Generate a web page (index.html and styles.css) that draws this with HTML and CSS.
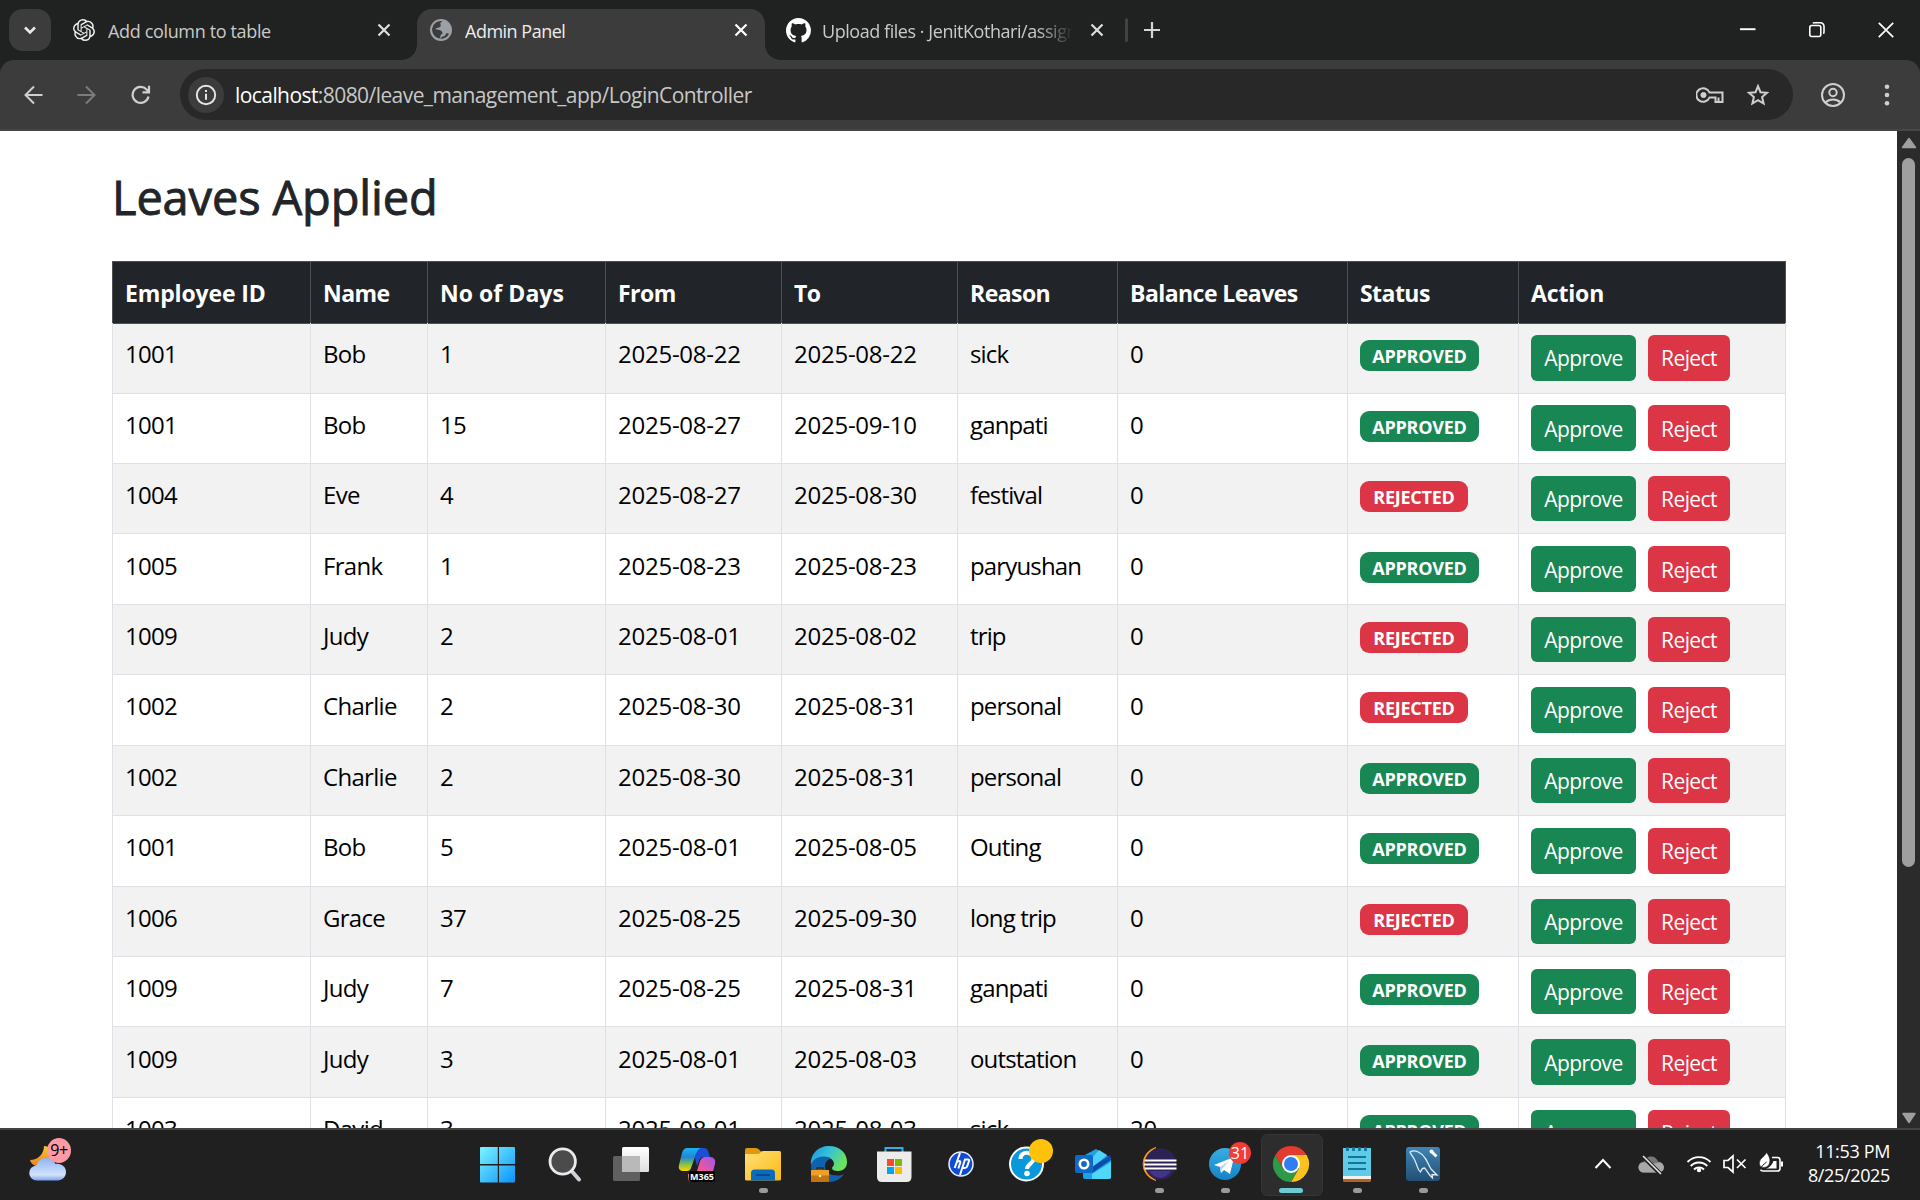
FILE: index.html
```html
<!DOCTYPE html>
<html lang="en">
<head>
<meta charset="utf-8">
<title>Admin Panel</title>
<link rel="stylesheet" href="styles.css">
</head>
<body>
<div class="desktop">
  <header class="tabstrip">
    <div class="tab-search"><svg width="42" height="42" viewBox="0 0 42 42"><path d="M16 18.5l5 5 5-5" fill="none" stroke="#e8e8e8" stroke-width="2.6"/></svg></div>
    <div class="tab tab-first">
      <svg class="fav" width="22" height="22" viewBox="0 0 24 24" fill="#f0f0f0"><path d="M22.28 9.82a5.98 5.98 0 0 0-.52-4.91 6.05 6.05 0 0 0-6.51-2.9A6.07 6.07 0 0 0 4.98 4.18a5.98 5.98 0 0 0-4 2.9 6.05 6.05 0 0 0 .74 7.1 5.98 5.98 0 0 0 .51 4.91 6.05 6.05 0 0 0 6.52 2.9A5.98 5.98 0 0 0 13.26 24a6.06 6.06 0 0 0 5.77-4.21 5.99 5.99 0 0 0 4-2.9 6.06 6.06 0 0 0-.75-7.07zm-9.02 12.61a4.48 4.48 0 0 1-2.88-1.04l.14-.08 4.78-2.76a.79.79 0 0 0 .39-.68v-6.74l2.02 1.17a.07.07 0 0 1 .04.05v5.58a4.5 4.5 0 0 1-4.49 4.5zM3.6 18.3a4.47 4.47 0 0 1-.54-3.01l.14.08 4.78 2.76a.77.77 0 0 0 .78 0l5.84-3.37v2.33a.08.08 0 0 1-.03.06L9.74 19.95a4.5 4.5 0 0 1-6.14-1.65zM2.34 7.9a4.49 4.49 0 0 1 2.37-1.98v5.68a.77.77 0 0 0 .39.68l5.81 3.35-2.02 1.17a.08.08 0 0 1-.07 0l-4.83-2.79A4.5 4.5 0 0 1 2.34 7.87zm16.6 3.86L13.1 8.36 15.12 7.2a.08.08 0 0 1 .07 0l4.83 2.79a4.49 4.49 0 0 1-.68 8.1v-5.68a.79.79 0 0 0-.4-.65zm2.01-3.02l-.14-.09-4.77-2.78a.78.78 0 0 0-.79 0L9.41 9.23V6.9a.07.07 0 0 1 .03-.06l4.83-2.79a4.5 4.5 0 0 1 6.68 4.66zM8.31 12.86l-2.02-1.16a.08.08 0 0 1-.04-.06V6.07a4.5 4.5 0 0 1 7.38-3.45l-.14.08L8.7 5.46a.79.79 0 0 0-.39.68zm1.1-2.37L12 9l2.61 1.5v3L12 15l-2.6-1.5z"/></svg>
      <span class="tab-title t1">Add column to table</span>
      <svg class="x" width="14" height="14" viewBox="0 0 14 14"><path d="M1.5 1.5l11 11M12.500 1.5l-11 11" stroke="#dedede" stroke-width="2.2"/></svg>
    </div>
    <div class="tab tab-active">
      <svg class="fav" width="22" height="22" viewBox="0 0 22 22"><circle cx="11" cy="11" r="11" fill="#9aa0a6"/><path d="M12.500 2.200c-2 1-2.500 2-2 3.300 .8.500 0 2.500-1.500 3-1.800.5-3.500.7-3.500 1.700l4 .8c1.500.5 3 1.500 3 3 0 1.200-1.500 1.500-2 2.500l-.5 3A9 9 0 0 1 2 11c0 1 1 1.500 2.500 2 1 .3 2.500.5 2.500 1.500v2.500c-3-1.500-5-4-5-7a9 9 0 0 1 10.500-7.800z" fill="#3c3c3c"/><path d="M10 19.800c1-.5 1.500-1.800 2.800-2.200 1.200-.4 2.500-.5 2.700-1.800.2-1 1-1.800 2.200-1.500l1.300.8c-1.500 3-5 5-9 4.700z" fill="#3c3c3c"/></svg>
      <span class="tab-title t2">Admin Panel</span>
      <svg class="x" width="14" height="14" viewBox="0 0 14 14"><path d="M1.500 1.500l11 11M12.500 1.500l-11 11" stroke="#fff" stroke-width="2.200"/></svg>
    </div>
    <div class="tab tab-last">
      <svg class="fav" width="25" height="25" viewBox="0 0 16 16" fill="#fff"><path d="M8 0C3.580 0 0 3.580 0 8c0 3.540 2.290 6.530 5.470 7.590.4.070.55-.17.55-.38 0-.19-.01-.82-.01-1.490-2.010.37-2.530-.49-2.690-.94-.09-.23-.48-.94-.82-1.130-.28-.15-.68-.52-.01-.53.63-.01 1.080.58 1.230.82.72 1.210 1.870.87 2.330.66.070-.52.28-.87.51-1.070-1.780-.2-3.640-.89-3.640-3.950 0-.87.31-1.590.82-2.150-.08-.2-.36-1.020.08-2.120 0 0 .67-.21 2.200.82.64-.18 1.320-.27 2-.27s1.360.09 2 .27c1.530-1.040 2.200-.82 2.200-.82.44 1.100.16 1.920.08 2.120.51.56.82 1.270.82 2.150 0 3.070-1.870 3.750-3.650 3.950.29.25.54.73.54 1.480 0 1.070-.01 1.930-.01 2.200 0 .21.15.46.55.38A8.010 8.010 0 0 0 16 8c0-4.420-3.580-8-8-8z"/></svg>
      <span class="tab-title t3">Upload files · JenitKothari/assignment</span>
      <svg class="x" width="14" height="14" viewBox="0 0 14 14"><path d="M1.500 1.500l11 11M12.500 1.500l-11 11" stroke="#dedede" stroke-width="2.200"/></svg>
    </div>
    <i class="tab-sep"></i>
    <svg class="newtab" width="16" height="16" viewBox="0 0 16 16"><path d="M8 0v16M0 8h16" stroke="#d6d6d6" stroke-width="2.200"/></svg>
    <div class="winctl">
      <svg width="16" height="16" viewBox="0 0 16 16"><path d="M0 7.200h15.500" stroke="#fff" stroke-width="1.900"/></svg>
      <svg width="16" height="16" viewBox="0 0 16 16" fill="none" stroke="#fff" stroke-width="1.600"><rect x=".8" y="3.500" width="11" height="11" rx="2"/><path d="M3.800 1.200C4.200.8 5 .8 6 .8h5.500a3.500 3.500 0 0 1 3.500 3.500V9.500c0 1.200-.2 1.800-.6 2.200"/></svg>
      <svg width="16" height="16" viewBox="0 0 16 16"><path d="M.8.8l14.400 14.400M15.200.8L.8 15.200" stroke="#fff" stroke-width="1.700"/></svg>
    </div>
  </header>

  <div class="toolbar">
    <svg class="nav" width="20" height="20" viewBox="0 0 20 20" fill="none" stroke="#cfcfcf" stroke-width="2"><path d="M19.500 10H2.500M11 1.500L2.500 10l8.500 8.500"/></svg>
    <svg class="nav" width="20" height="20" viewBox="0 0 20 20" fill="none" stroke="#7c7c7c" stroke-width="2"><path d="M.5 10h17M9 1.500l8.500 8.500L9 18.500"/></svg>
    <svg class="nav" width="20" height="20" viewBox="0 0 20 20" fill="none" stroke="#cfcfcf" stroke-width="2.200"><path d="M17.500 11.500A8 8 0 1 1 15.600 4.500L17.500 6.500M18 .8v6.500h-6.500"/></svg>
    <div class="omnibox">
      <span class="info"><svg width="22" height="22" viewBox="0 0 22 22"><circle cx="11" cy="11" r="9.200" fill="none" stroke="#e6e6e6" stroke-width="1.900"/><path d="M11 9.800v6M11 6v2" stroke="#e6e6e6" stroke-width="2"/></svg></span>
      <span class="url"><b>localhost</b>:8080/leave_management_app/LoginController</span>
      <svg class="key" width="28" height="20" viewBox="0 0 28 20" fill="none" stroke="#cfcfcf" stroke-width="2"><path d="M13.500 7.500A6.800 6.800 0 1 0 13.500 12.500H19.500V17H26.500V7.500z"/><circle cx="7.500" cy="10" r="2.600" fill="#cfcfcf" stroke-width="1"/><path d="M22.500 12.500V16" /></svg>
      <svg class="star" width="24" height="24" viewBox="0 0 24 24" fill="none" stroke="#cfcfcf" stroke-width="2"><path d="M12 3.200l2.500 6 6.500.6-4.900 4.300 1.500 6.400-5.600-3.400-5.600 3.400 1.500-6.400L3 9.800l6.500-.6z"/></svg>
    </div>
    <svg class="profile" width="26" height="26" viewBox="0 0 26 26" fill="none" stroke="#cfcfcf" stroke-width="2"><circle cx="13" cy="13" r="11"/><circle cx="13" cy="10.500" r="3.700"/><path d="M5.500 20.500c4-4 11-4 15 0"/></svg>
    <svg class="dots" width="6" height="24" viewBox="0 0 6 24" fill="#cfcfcf"><circle cx="3" cy="3.700" r="2.300"/><circle cx="3" cy="12" r="2.300"/><circle cx="3" cy="20.300" r="2.300"/></svg>
  </div>

  <div class="viewport">
    <main class="page">
      <h2>Leaves Applied</h2>
      <table>
        <thead>
          <tr><th class="w0">Employee ID</th><th class="w1">Name</th><th class="w2">No of Days</th><th class="w3">From</th><th class="w4">To</th><th class="w5">Reason</th><th class="w6">Balance Leaves</th><th class="w7">Status</th><th class="w8">Action</th></tr>
        </thead>
        <tbody>
          <tr><td>1001</td><td>Bob</td><td>1</td><td>2025-08-22</td><td>2025-08-22</td><td>sick</td><td>0</td><td><span class="badge ok">APPROVED</span></td><td class="act"><button class="btn ok">Approve</button><button class="btn no">Reject</button></td></tr>
          <tr><td>1001</td><td>Bob</td><td>15</td><td>2025-08-27</td><td>2025-09-10</td><td>ganpati</td><td>0</td><td><span class="badge ok">APPROVED</span></td><td class="act"><button class="btn ok">Approve</button><button class="btn no">Reject</button></td></tr>
          <tr><td>1004</td><td>Eve</td><td>4</td><td>2025-08-27</td><td>2025-08-30</td><td>festival</td><td>0</td><td><span class="badge no">REJECTED</span></td><td class="act"><button class="btn ok">Approve</button><button class="btn no">Reject</button></td></tr>
          <tr><td>1005</td><td>Frank</td><td>1</td><td>2025-08-23</td><td>2025-08-23</td><td>paryushan</td><td>0</td><td><span class="badge ok">APPROVED</span></td><td class="act"><button class="btn ok">Approve</button><button class="btn no">Reject</button></td></tr>
          <tr><td>1009</td><td>Judy</td><td>2</td><td>2025-08-01</td><td>2025-08-02</td><td>trip</td><td>0</td><td><span class="badge no">REJECTED</span></td><td class="act"><button class="btn ok">Approve</button><button class="btn no">Reject</button></td></tr>
          <tr><td>1002</td><td>Charlie</td><td>2</td><td>2025-08-30</td><td>2025-08-31</td><td>personal</td><td>0</td><td><span class="badge no">REJECTED</span></td><td class="act"><button class="btn ok">Approve</button><button class="btn no">Reject</button></td></tr>
          <tr><td>1002</td><td>Charlie</td><td>2</td><td>2025-08-30</td><td>2025-08-31</td><td>personal</td><td>0</td><td><span class="badge ok">APPROVED</span></td><td class="act"><button class="btn ok">Approve</button><button class="btn no">Reject</button></td></tr>
          <tr><td>1001</td><td>Bob</td><td>5</td><td>2025-08-01</td><td>2025-08-05</td><td>Outing</td><td>0</td><td><span class="badge ok">APPROVED</span></td><td class="act"><button class="btn ok">Approve</button><button class="btn no">Reject</button></td></tr>
          <tr><td>1006</td><td>Grace</td><td>37</td><td>2025-08-25</td><td>2025-09-30</td><td>long trip</td><td>0</td><td><span class="badge no">REJECTED</span></td><td class="act"><button class="btn ok">Approve</button><button class="btn no">Reject</button></td></tr>
          <tr><td>1009</td><td>Judy</td><td>7</td><td>2025-08-25</td><td>2025-08-31</td><td>ganpati</td><td>0</td><td><span class="badge ok">APPROVED</span></td><td class="act"><button class="btn ok">Approve</button><button class="btn no">Reject</button></td></tr>
          <tr><td>1009</td><td>Judy</td><td>3</td><td>2025-08-01</td><td>2025-08-03</td><td>outstation</td><td>0</td><td><span class="badge ok">APPROVED</span></td><td class="act"><button class="btn ok">Approve</button><button class="btn no">Reject</button></td></tr>
          <tr><td>1003</td><td>David</td><td>3</td><td>2025-08-01</td><td>2025-08-03</td><td>sick</td><td>20</td><td><span class="badge ok">APPROVED</span></td><td class="act"><button class="btn ok">Approve</button><button class="btn no">Reject</button></td></tr>
        </tbody>
      </table>
    </main>
    <div class="scrollbar">
      <svg width="16" height="12" viewBox="0 0 16 12"><path d="M8 1.500L14.500 10.500H1.500z" fill="#9f9f9f" stroke="#9f9f9f" stroke-width="1.500" stroke-linejoin="round"/></svg>
      <i class="thumb"></i>
      <svg class="down" width="16" height="12" viewBox="0 0 16 12"><path d="M8 10.500L14 1.500H2z" fill="#9f9f9f" stroke="#9f9f9f" stroke-width="1.500" stroke-linejoin="round"/></svg>
    </div>
  </div>

  <footer class="taskbar">
    <div class="weather">
      <svg width="40" height="40" viewBox="28 1144 40 40">
        <defs>
          <linearGradient id="moon" x1="0" y1="0" x2="0" y2="1"><stop offset="0" stop-color="#f6c83a"/><stop offset="1" stop-color="#ee7d18"/></linearGradient>
          <linearGradient id="cloud" x1="0" y1="0" x2="0" y2="1"><stop offset="0" stop-color="#8db4f4"/><stop offset=".75" stop-color="#d3e2fa"/><stop offset="1" stop-color="#7ba2ee"/></linearGradient>
        </defs>
        <path d="M44 1146c0 8-6 14-14 14 1 4 5 7 11 7 8 0 13-6 12-13-1-5-5-8-9-8z" fill="url(#moon)"/>
        <path d="M37 1180.500a7.500 7.500 0 0 1-.5-15c1-4.500 5-7.500 9.500-7.500s8 2.500 9.500 6c6-1 10.500 3 10.500 8 0 4.700-3.500 8.500-8.500 8.500z" fill="url(#cloud)"/>
      </svg>
      <span class="wbadge">9+</span>
    </div>
    <div class="apps">
      <div class="app"><svg width="66" height="70" viewBox="0 2 66 70"><defs><linearGradient id="win" x1="0" y1="0" x2="1" y2="1"><stop offset="0" stop-color="#7df3ff"/><stop offset="1" stop-color="#0a94fb"/></linearGradient></defs><path fill="url(#win)" d="M17 19h16.800v17H16V20q0-1 1-1zM35 19h15q1 0 1 1v16H35zM16 37.500h17.800V54.500H17q-1 0-1-1zM35 37.500h16v16q0 1-1 1H35z"/></svg></div>
      <div class="app"><svg width="66" height="70" viewBox="0 2 66 70"><path d="M42.500 44l6.500 7.500" stroke="#cdd2d8" stroke-width="4" stroke-linecap="round"/><circle cx="32.700" cy="33.500" r="12.700" fill="#4b4b4b" stroke="#e9ebee" stroke-width="2.800"/></svg></div>
      <div class="app"><svg width="66" height="70" viewBox="0 2 66 70"><defs><linearGradient id="tv" x1="0" y1="0" x2="0" y2="1"><stop offset="0" stop-color="#fff"/><stop offset="1" stop-color="#dedede"/></linearGradient></defs><rect x="17" y="28" width="27" height="25" rx="1.500" fill="#606060"/><rect x="26" y="19" width="27" height="25" rx="1.500" fill="url(#tv)"/><rect x="26" y="28" width="18" height="16" fill="#b9b9b9"/></svg></div>
      <div class="app"><svg width="66" height="70" viewBox="0 2 66 70"><defs><linearGradient id="cpa" x1="0" y1="0" x2="0" y2="1"><stop offset="0" stop-color="#1ab4f0"/><stop offset=".4" stop-color="#1f86d8"/><stop offset=".7" stop-color="#7fc04b"/><stop offset="1" stop-color="#ffd500"/></linearGradient><linearGradient id="cpb" x1="1" y1="0" x2="0" y2="1"><stop offset="0" stop-color="#a056f0"/><stop offset=".5" stop-color="#f0569a"/><stop offset="1" stop-color="#ff8a4c"/></linearGradient></defs><path d="M34 20h8q3 0 4 3l2 6h-6q-4 0-5 4l-2 5-2-8z" fill="#1d4fd6"/><path d="M25 20h14c-3 1-4 3-5 6l-5 14q-1 3-4 3h-3c-4 0-6-2-5-6l3-12q1.500-5 5-5z" fill="url(#cpa)"/><path d="M42 29h6c4 0 6 3 5 7l-3 11c-1 4-4 7-8 7H28q-2-1-2-8h5q3 0 4-3l3-10q1-3 4-4z" fill="url(#cpb)"/><rect x="27" y="43" width="26" height="11" rx="2" fill="#000"/><text x="40" y="52" class="m365">M365</text></svg></div>
      <div class="app run"><svg width="66" height="70" viewBox="-2 2 66 70"><defs><linearGradient id="fo" x1="0" y1="0" x2="1" y2="1"><stop offset="0" stop-color="#ffe07a"/><stop offset="1" stop-color="#fcb911"/></linearGradient></defs><path d="M15 22q0-2 2-2h9q1.500 0 3 1.500l2 2-3 3H15z" fill="#e09a09"/><path d="M15 26h12q2 0 3-1.500T33 23h16.500q1.500 0 1.500 1.500V51q0 1.500-1.500 1.500h-33Q15 52.500 15 51z" fill="url(#fo)"/><path d="M21 52.500V45q0-3.500 3.500-3.500h17q3.500 0 3.500 3.500v7.500z" fill="#0b6cbf"/><path d="M26 47h14" stroke="#0a3f74" stroke-width="1.500"/></svg></div>
      <div class="app"><svg width="66" height="70" viewBox="-2 2 66 70"><defs><linearGradient id="eg" x1="0" y1="0" x2="1" y2=".5"><stop offset="0" stop-color="#1b8fe0"/><stop offset=".5" stop-color="#35c2d8"/><stop offset="1" stop-color="#6be45a"/></linearGradient></defs><path d="M15 37C14 26 22 18 33 18c11 0 18 7 18 16 0 6-4 9-9 9-4 0-6-1-6-3 0-1 2-2 2-4 0-4-4-7-9-7-6 0-12 3-14 8z" fill="url(#eg)"/><path d="M15 38c1-6 6-9.500 12-9.500 3 0 6 .5 8 2-4 1-6 4-6 8 0 6 5 9 12 9 3 0 5-.5 7-1.500-3 5-9 8-15 8-10 0-18-7-18-16z" fill="#0f63ae"/><path d="M15 42h18v10.500q0 1.500-1.500 1.500H15z" fill="#c27413"/><path d="M15 42h18v5.500H15z" fill="#ee9f26"/><path d="M21 41.500v-1.500h6v1.500" fill="none" stroke="#3c2810" stroke-width="1.500"/><circle cx="24" cy="48" r="1.300" fill="#ffe9a8"/></svg></div>
      <div class="app"><svg width="66" height="70" viewBox="0 2 66 70"><path d="M25.500 25v-5h17v5" fill="none" stroke="#2cb1e4" stroke-width="2"/><path d="M17 23.500h34.500V49q0 5-5 5H22q-5 0-5-5z" fill="#ececec"/><path d="M27 31h7v7h-7z" fill="#f25022"/><path d="M35 31h7v7h-7z" fill="#7fba00"/><path d="M27 39h7v7h-7z" fill="#00a4ef"/><path d="M35 39h7v7h-7z" fill="#ffb900"/></svg></div>
      <div class="app"><svg width="66" height="70" viewBox="0 2 66 70"><circle cx="35" cy="36" r="12" fill="#0f4bd8" stroke="#eef2ff" stroke-width="1.500"/><path d="M34 25l-5.300 15M31 34q4-2 3.300.5l-2 6M40 31.500h-1l-5 15.500M38.500 31.500h3.500q1.500 0 1 1.500l-1.700 5q-.6 2-2.500 2h-2.500" stroke="#fff" stroke-width="2" fill="none"/></svg></div>
      <div class="app"><svg width="66" height="70" viewBox="0 2 66 70"><circle cx="34.500" cy="36" r="16.500" fill="#0a98dc" stroke="#fff" stroke-width="2"/><path d="M28.500 31c0-9 14-7.500 13 .5-.5 4-6.500 4.500-6.500 9.500" fill="none" stroke="#fff" stroke-width="4"/><circle cx="35" cy="45.500" r="2.800" fill="#fff"/><circle cx="49" cy="23" r="12" fill="#ffc20a"/></svg></div>
      <div class="app"><svg width="66" height="70" viewBox="-2 2 66 70"><path d="M23 28l13-7 15 9v19q0 2-2 2H25q-2 0-2-2z" fill="#1f9fe6"/><path d="M30 32l9-10 8 5-14 12z" fill="#4fd2fa"/><path d="M32 39l18-12 1 5-19 13z" fill="#0b4ca8"/><path d="M32 46l19-12v15q0 2-2 2H32z" fill="#4dd8f8"/><rect x="15" y="27" width="18" height="18" rx="2" fill="#0f69c9"/><circle cx="24" cy="36" r="4.200" fill="none" stroke="#fff" stroke-width="2.600"/></svg></div>
      <div class="app run"><svg width="66" height="70" viewBox="0 2 66 70"><path d="M32 19.500a17 17 0 0 0 0 33C22 48 21 24 32 19.500z" fill="#f7941e" stroke="#f7941e" stroke-width="1"/><circle cx="36.500" cy="36" r="15.800" fill="#2c2255"/><path d="M25 43h22q-5 7-11 7t-11-7z" fill="#43348c"/><path d="M20.500 32.500h32M20 36.500h32.500M20.500 40.500h32" stroke="#fff" stroke-width="1.900"/></svg></div>
      <div class="app run"><svg width="66" height="70" viewBox="0 2 66 70"><defs><linearGradient id="tg" x1="0" y1="0" x2="0" y2="1"><stop offset="0" stop-color="#37aee2"/><stop offset="1" stop-color="#1583c6"/></linearGradient></defs><circle cx="35" cy="36" r="16" fill="url(#tg)"/><path d="M24 37l20-8-4 17-6-4-3 3-1-6z" fill="#fff"/><path d="M30 39l9-6-7 8-1 4z" fill="#b7d5e8"/><circle cx="50" cy="25" r="11" fill="#f23c36"/><text x="50" y="31" class="t31">31</text></svg></div>
      <div class="app sel"><svg width="66" height="70" viewBox="0 2 66 70"><path d="M35 27h15.600A18 18 0 0 1 35 54l7.800-13.500z" fill="#fcc31e"/><path d="M42.800 40.500L35 54A18 18 0 0 1 19.400 27l7.800 13.500z" fill="#2d9a47"/><path d="M19.400 27a18 18 0 0 1 31.200 0H35l-7.800 13.500z" fill="#e33b2e"/><circle cx="35" cy="36" r="9" fill="#fff"/><circle cx="35" cy="36" r="7" fill="#2f7df0"/></svg></div>
      <div class="app run"><svg width="66" height="70" viewBox="0 2 66 70"><path d="M21 49h28v3.500q0 1.500-1.500 1.500h-25Q21 54 21 52.500z" fill="#b8601c"/><path d="M21 46h28v5H21z" fill="#f3f1ee"/><path d="M21 20h28v28H21z" fill="#5fcbe6"/><path d="M25.500 19v4M31.500 19v4M37.500 19v4M43.500 19v4" stroke="#0b6c96" stroke-width="2.500"/><path d="M26 29h18M26 35h18M26 41h18" stroke="#11759c" stroke-width="2"/></svg></div>
      <div class="app run"><svg width="66" height="70" viewBox="0 2 66 70"><defs><linearGradient id="my" x1="0" y1="0" x2="0" y2="1"><stop offset="0" stop-color="#3f85b4"/><stop offset="1" stop-color="#234f73"/></linearGradient></defs><rect x="18" y="19" width="34" height="34" rx="3" fill="url(#my)"/><path d="M22 24c5-3 12 1 15 6 3 4 4 8 6 11l6 6-5-.5.500 3.500c-4-3-5-7-8-10-3 0-3 2-4 4-3-2-3-6-5-10-1-4-4-6-5.500-10z" fill="none" stroke="#dcebf4" stroke-width="1.300"/><path d="M43.500 23.500l5 5" stroke="#fff" stroke-width="3"/><circle cx="43.500" cy="23.500" r="2" fill="#fff"/></svg></div>
    </div>
    <div class="tray">
      <svg width="200" height="30" viewBox="1590 1148 200 30">
        <path d="M1595.500 1168l7.500-8 7.500 8" fill="none" stroke="#fff" stroke-width="2"/>
        <path d="M1644 1172.500a5.500 5.500 0 0 1 0-11c1-3.500 4-5 7-5 3.500 0 6 2 7 5a5.500 5.500 0 0 1 0 11z" fill="#777"/><path d="M1644 1172.500a5 5 0 0 1-1-10q4-1 7 2l9-2a5 5 0 0 1 0 10z" fill="#a8a8a8"/>
        <path d="M1642.500 1156l18 18" stroke="#202020" stroke-width="4"/><path d="M1643 1156l18 18" stroke="#e8e8e8" stroke-width="1.600"/>
        <g fill="none" stroke="#fff" stroke-width="1.900"><path d="M1687.500 1162a16 16 0 0 1 23 0M1690.700 1166a11.500 11.500 0 0 1 16.600 0M1694 1169.500a7 7 0 0 1 10 0"/></g><circle cx="1699" cy="1170" r="2.200" fill="#fff"/>
        <path d="M1724 1160.500h4l5-4.500v16l-5-4.500h-4zM1737 1159.500l8.500 8.500M1745.500 1159.500l-8.500 8.500" fill="none" stroke="#fff" stroke-width="1.700"/>
        <path d="M1772 1157.500h5.500q2.500 0 2.500 2.500v8.500q0 2.500-2.500 2.500H1763q-2 0-2.500-1.500" fill="none" stroke="#fff" stroke-width="1.600"/><path d="M1781 1161.500h2v5h-2z" fill="#fff"/><path d="M1766 1168.500q5-1 7.500-7.500h3v7.500z" fill="#fff"/><path d="M1766.500 1152.500c3 4 4 7 3 10.500-1 3.500-3.500 4.500-6 4.500-3 0-4.500-2.500-4-5.500.5-4 5-5 7-9.500z" fill="#fff" stroke="#202020" stroke-width=".6"/><path d="M1759.500 1170q3-5.500 7-8" stroke="#202020" fill="none"/>
      </svg>
    </div>
    <div class="clock"><span>11:53 PM</span><span>8/25/2025</span></div>
  </footer>
</div>
</body>
</html>
```
FILE: styles.css
```css
* { box-sizing: border-box; }
body { margin: 0; font-family: "Open Sans", "Noto Sans", sans-serif; font-size: 24px; color: #000; }
svg { display: block; flex: none; }
.desktop { width: 1920px; height: 1200px; display: flex; flex-direction: column; overflow: hidden; background: #202221; }

/* tab strip */
.tabstrip { height: 60px; flex: none; display: flex; padding: 9px 26px 0 9px; color: #c9c9c9; font-size: 18px; }
.tab-search { width: 42px; height: 42px; border-radius: 14px; background: #3c3c3c; }
.tab { display: flex; height: 51px; padding-bottom: 9px; align-items: center; }
.tab-first { width: 366px; padding-left: 22px; }
.tab-active { width: 348px; padding-left: 13px; background: #3c3c3c; border-radius: 15px 15px 0 0; color: #ededed; position: relative; }
.tab-active::before, .tab-active::after { content: ""; position: absolute; bottom: 0; width: 15px; height: 15px; }
.tab-active::before { left: -15px; background: radial-gradient(circle at 0 0, transparent 14.5px, #3c3c3c 15px); }
.tab-active::after { right: -15px; background: radial-gradient(circle at 100% 0, transparent 14.5px, #3c3c3c 15px); }
.tab-last { width: 360px; padding-left: 21px; }
.tab-title { white-space: nowrap; line-height: 26px; padding-top: 2px; overflow: hidden; }
.t1 { width: 269px; margin-left: 13px; letter-spacing: -.35px; }
.t2 { width: 269px; margin-left: 13px; letter-spacing: -.5px; }
.t3 { width: 251px; margin: 0 18px 0 11px; letter-spacing: -.45px; -webkit-mask-image: linear-gradient(90deg, #000 215px, transparent 251px); }
.tab-last .x { margin-left: -1px; }
.tab-sep { width: 3px; height: 24px; margin-top: 9px; border-radius: 2px; background: #414342; }
.newtab { margin: 13px 0 0 16px; }
.winctl { margin: 13px 0 0 auto; display: flex; gap: 53px; }

/* toolbar */
.toolbar { height: 71px; flex: none; display: flex; align-items: center; padding: 0 29px 2px 23px; background: #3c3c3c; border-radius: 14px 14px 0 0; box-shadow: inset 0 -2px #464646; }
.nav { margin-right: 34px; }
.omnibox { width: 1613px; height: 51px; margin: 0 27px 0 -5px; padding: 0 23px 0 8px; display: flex; align-items: center; border-radius: 26px; background: #282828; }
.info { width: 36px; height: 36px; border-radius: 50%; background: #3c3c3c; display: flex; align-items: center; justify-content: center; }
.url { flex: 1; margin-left: 11px; font-size: 21px; line-height: 30px; color: #c7c7c7; letter-spacing: -.57px; }
.url b { font-weight: 400; color: #fff; }
.star { margin-left: 22px; }
.dots { margin-left: 38px; }

/* page */
.viewport { height: 997px; flex: none; display: flex; background: #fff; overflow: hidden; }
.page { width: 1897px; height: 997px; overflow: hidden; padding: 35px 0 0 112px; }
h2 { margin: 0; height: 95px; font-size: 47px; line-height: 62px; font-weight: 500; letter-spacing: -.15px; color: #212529; -webkit-text-stroke: .9px #212529; }
table, thead, tbody { display: block; }
table { width: 1674px; }
tr { display: grid; grid-template-columns: 199px 117px 178px 176px 176px 160px 230px 171px 267px; height: 70.45px; }
th, td { padding: 12px; text-align: left; line-height: 36px; border: solid #dee2e6; border-width: 0 1px 1px 0; white-space: nowrap; letter-spacing: -.25px; }
td { padding-top: 13.3px; }
td:first-child, td:nth-child(2), td:nth-child(3) { letter-spacing: -.7px; }
td:nth-child(6) { letter-spacing: -.85px; }
th:first-child, td:first-child { border-left-width: 1px; }
thead tr { height: 62px; }
th { background: #212529; color: #fff; border-color: #4d5154; border-top-width: 1px; font-weight: 700; font-size: 23px; padding-top: 13px; letter-spacing: -.55px; }
th.w0 { letter-spacing: -.15px; }
th.w2 { letter-spacing: .05px; }
th.w8 { letter-spacing: -.15px; }
tbody tr:nth-child(odd) { background: #f2f2f2; }
.badge { display: block; width: 119px; height: 31px; margin-top: 4px; border-radius: 9px; font-size: 18px; font-weight: 700; line-height: 32px; text-align: center; color: #fff; letter-spacing: -.25px; }
.badge.no { width: 108px; }
.ok { background: #198754; }
.no { background: #dc3545; }
td.act { display: flex; gap: 12px; padding-top: 12px; }
.btn { height: 45.5px; width: 105px; padding: 1px 0 0; border: 0; border-radius: 6px; font: 21px/42px "Open Sans", sans-serif; color: #fff; letter-spacing: -.6px; }
.btn.no { width: 82px; }

/* scrollbar */
.scrollbar { width: 23px; background: #2b2b2b; display: flex; flex-direction: column; align-items: center; padding-top: 6px; }
.thumb { width: 13px; height: 709px; margin-top: 9px; border-radius: 7px; background: #9f9f9f; }
.down { margin: auto 0 4px; }

/* taskbar */
.taskbar { height: 72px; flex: none; display: flex; border-top: 2px solid #434343; background: #202020; color: #fff; }
.weather { width: 464px; padding: 14px 0 0 28px; position: relative; }
.wbadge { position: absolute; left: 47px; top: 8px; width: 24px; height: 25px; border-radius: 50%; background: #ff99a4; color: #000; font-size: 16px; line-height: 24px; text-align: center; letter-spacing: -.5px; }
.apps { display: flex; }
.app { width: 66px; height: 70px; position: relative; }
.app svg { position: relative; }
.run::after, .sel::after { content: ""; position: absolute; left: 31px; top: 58px; width: 9px; height: 5px; border-radius: 3px; background: #9a9a9a; }
.app.sel::after { left: 23px; width: 24px; background: #6ccbd3; }
.sel::before { content: ""; position: absolute; left: 5px; top: 4px; width: 60px; height: 60px; border-radius: 6px; background: #2d2d2d; border: 1px solid #353535; }
.m365 { font: 700 9px "Open Sans", sans-serif; fill: #fff; text-anchor: middle; }
.t31 { font: 16px "Open Sans", sans-serif; fill: #fff; text-anchor: middle; }
.tray { margin: 18px 0 0 136px; }
.clock { width: 100px; margin-top: 9px; display: flex; flex-direction: column; align-items: flex-end; font-size: 18px; line-height: 24px; letter-spacing: -.35px; }
```
